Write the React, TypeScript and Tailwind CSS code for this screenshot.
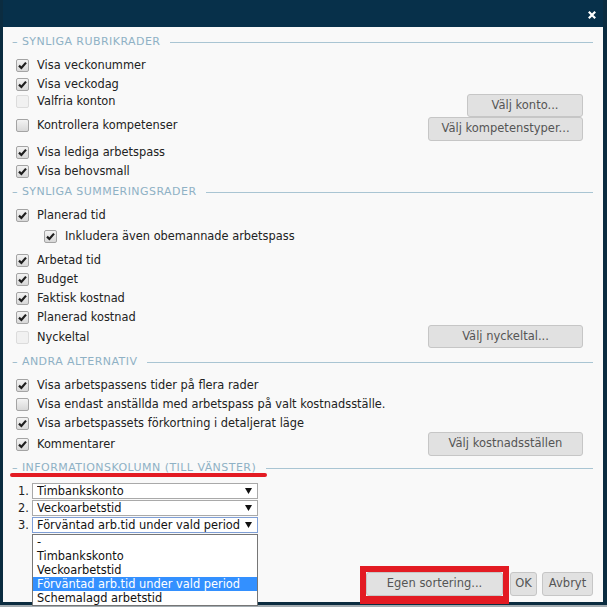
import React from 'react';

type BoxState = 'on' | 'off' | 'disabled';

const Box: React.FC<{ state: BoxState }> = ({ state }) => {
  if (state === 'disabled') {
    return <span className="w-[13px] h-[13px] shrink-0 rounded-[2px] border border-[#dcdcdc] bg-[#f1f1f1]" />;
  }
  return (
    <span className="w-[13px] h-[13px] shrink-0 rounded-[2px] border border-[#a4a4a4] bg-linear-to-b from-[#f3f3f3] to-[#d8d8d8] flex items-center justify-center">
      {state === 'on' && (
        <svg width="11" height="11" viewBox="0 0 11 11">
          <path d="M2 5.6 L4.4 8 L9 2.6" fill="none" stroke="#1e1e1e" strokeWidth="2.2" />
        </svg>
      )}
    </span>
  );
};

const Check: React.FC<{ state: BoxState; label: string; className?: string }> = ({ state, label, className = '' }) => (
  <div className={'flex items-center gap-[8px] pl-[4px] ' + className}>
    <Box state={state} />
    <span className="text-[11.4px] leading-[19px] text-[#222] whitespace-nowrap">{label}</span>
  </div>
);

const Section: React.FC<{ title: string; className?: string; children?: React.ReactNode }> = ({ title, className = '', children }) => (
  <div className={'relative flex items-center h-[20px] ' + className}>
    <span className="text-[11px] tracking-[0.45px] text-[#8fb1c5] whitespace-nowrap">– {title}</span>
    <div className="flex-1 h-px bg-[#a9c5d3] ml-[10px]" />
    {children}
  </div>
);

const Btn: React.FC<{ className?: string; children: React.ReactNode }> = ({ className = '', children }) => (
  <button className={'rounded-[3px] border border-[#c6c6c6] bg-[#e1e1e1] text-[11.5px] leading-none text-[#555] whitespace-nowrap ' + className}>
    {children}
  </button>
);

const Arrow = () => (
  <svg width="7" height="6" viewBox="0 0 7 6" className="shrink-0">
    <path d="M0 0 H7 L3.5 6 Z" fill="#111" />
  </svg>
);

const Select: React.FC<{ n: string; value: string; focused?: boolean; children?: React.ReactNode }> = ({ n, value, focused, children }) => (
  <div className="relative flex items-center h-[16px]">
    <span className="w-[14px] text-[11.4px] leading-[16px] text-[#222]">{n}</span>
    <div
      className={
        focused
          ? 'w-[226px] h-[16px] border border-[#7f9fd6] bg-white flex items-center pl-[4px] pr-[5px] gap-[1px]'
          : 'w-[226px] h-[16px] border border-[#a9a9a9] bg-white flex items-center pl-[4px] pr-[5px] gap-[1px]'
      }
    >
      <span className="flex-1 overflow-hidden whitespace-nowrap text-[11.4px] leading-[14px] text-[#111]">{value}</span>
      <Arrow />
    </div>
    {children}
  </div>
);

const options = ['-', 'Timbankskonto', 'Veckoarbetstid', 'Förväntad arb.tid under vald period', 'Schemalagd arbetstid'];

export default function App() {
  return (
    <div className="w-[607px] h-[607px] bg-[#a3acb1] overflow-hidden font-['DejaVu_Sans',Verdana,sans-serif]">
      <div className="h-[605px] flex flex-col bg-[#f9f9f9] border-l-[3px] border-r-[4px] border-b-[3px] border-[#0b2c40]">
        <div className="h-[27px] shrink-0 bg-[#07304a] flex items-center justify-end pr-[7px] pt-[3px]">
          <svg width="8" height="8" viewBox="0 0 8 8">
            <path d="M0.8 0.8 L7.2 7.2 M7.2 0.8 L0.8 7.2" stroke="#fff" strokeWidth="2.2" />
          </svg>
        </div>

        <div className="flex-1 flex flex-col pl-[9px] pr-[10px] pt-[5px]">
          <Section title="SYNLIGA RUBRIKRADER" />
          <div className="mt-[4px] h-[19px] flex items-center">
            <Check state="on" label="Visa veckonummer" />
          </div>
          <div className="h-[17px] flex items-start">
            <Check state="on" label="Visa veckodag" />
          </div>
          <div className="h-[26px] flex items-start justify-between">
            <Check state="disabled" label="Valfria konton" />
            <Btn className="mt-[2px] h-[23px] w-[116px] mr-[10px]">Välj konto...</Btn>
          </div>
          <div className="h-[25px] flex items-start justify-between">
            <Check state="off" label="Kontrollera kompetenser" className="-mt-[2px]" />
            <Btn className="-mt-[1px] h-[24px] w-[155px] mr-[10px]">Välj kompetenstyper...</Btn>
          </div>
          <div className="h-[19px] flex items-center">
            <Check state="on" label="Visa lediga arbetspass" />
          </div>
          <div className="h-[19px] flex items-center">
            <Check state="on" label="Visa behovsmall" />
          </div>

          <Section title="SYNLIGA SUMMERINGSRADER" className="mt-[1px]" />
          <div className="mt-[4px] h-[19px] flex items-center">
            <Check state="on" label="Planerad tid" />
          </div>
          <div className="mt-[2px] h-[19px] flex items-center pl-[28px]">
            <Check state="on" label="Inkludera även obemannade arbetspass" />
          </div>
          <div className="mt-[5px] h-[19px] flex items-center">
            <Check state="on" label="Arbetad tid" />
          </div>
          <div className="h-[19px] flex items-center">
            <Check state="on" label="Budget" />
          </div>
          <div className="h-[19px] flex items-center">
            <Check state="on" label="Faktisk kostnad" />
          </div>
          <div className="h-[18px] flex items-start">
            <Check state="on" label="Planerad kostnad" />
          </div>
          <div className="h-[23px] flex items-start justify-between">
            <Check state="disabled" label="Nyckeltal" className="mt-[2px]" />
            <Btn className="-mt-[1px] h-[23px] w-[155px] mr-[10px]">Välj nyckeltal...</Btn>
          </div>

          <Section title="ANDRA ALTERNATIV" className="mt-[3px]" />
          <div className="mt-[4px] h-[19px] flex items-center">
            <Check state="on" label="Visa arbetspassens tider på flera rader" />
          </div>
          <div className="h-[19px] flex items-center">
            <Check state="off" label="Visa endast anställda med arbetspass på valt kostnadsställe." />
          </div>
          <div className="h-[19px] flex items-center">
            <Check state="on" label="Visa arbetspassets förkortning i detaljerat läge" />
          </div>
          <div className="h-[24px] flex items-start justify-between">
            <Check state="on" label="Kommentarer" className="mt-[2px]" />
            <Btn className="-mt-[1px] h-[24px] w-[155px] mr-[10px]">Välj kostnadsställen</Btn>
          </div>

          <Section title="INFORMATIONSKOLUMN (TILL VÄNSTER)" className="mt-[1px]">
            <div className="absolute left-[-2px] top-[15px] w-[257px] h-[4px] rounded-full bg-[#e31b23]" />
          </Section>

          <div className="mt-[5px] pl-[6px] flex flex-col gap-[1px]">
            <Select n="1." value="Timbankskonto" />
            <Select n="2." value="Veckoarbetstid" />
            <Select n="3." value="Förväntad arb.tid under vald period" focused>
              <div className="absolute z-10 left-[14px] top-[17px] w-[226px] border border-[#767676] bg-white">
                {options.map((o, i) => (
                  <div
                    key={o}
                    className={
                      i === 3
                        ? 'h-[14px] pl-[4px] text-[11.4px] leading-[14px] whitespace-nowrap bg-[#3390ff] text-white'
                        : 'h-[14px] pl-[4px] text-[11.4px] leading-[14px] whitespace-nowrap text-[#111]'
                    }
                  >
                    {o}
                  </div>
                ))}
              </div>
            </Select>
          </div>

          <div className="mt-auto -mb-[2px] flex justify-end items-start">
            <div className="border-[6px] border-b-[8px] border-[#e31b23]">
              <Btn className="block h-[24px] w-[137px]">Egen sortering...</Btn>
            </div>
            <Btn className="mt-[6px] ml-[1px] h-[24px] w-[27px]">OK</Btn>
            <Btn className="mt-[6px] ml-[5px] h-[24px] w-[51px]">Avbryt</Btn>
          </div>
        </div>
      </div>
    </div>
  );
}
